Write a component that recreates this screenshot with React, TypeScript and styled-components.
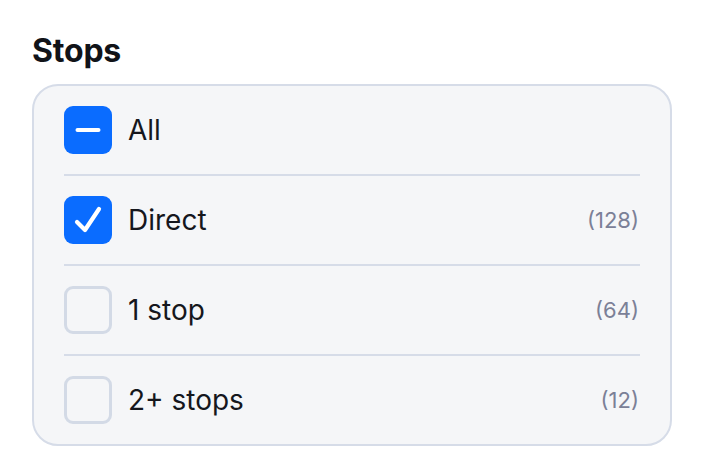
import React from "react";
import styled, { createGlobalStyle } from "styled-components";

const Global = createGlobalStyle`
  html, body { margin: 0; padding: 0; background: #ffffff; }
  body { font-family: Inter, "Noto Sans", sans-serif; color: #14161c; }
`;

const Page = styled.div`
  padding: 31px 32px 0 32px;
  width: 640px;
`;

const Title = styled.h2`
  margin: 0 0 13px 0;
  font-size: 32px;
  line-height: 40px;
  font-weight: 700;
  letter-spacing: -0.2px;
  color: #111318;
`;

const Panel = styled.div`
  box-sizing: border-box;
  width: 640px;
  border: 2px solid #d6dce8;
  border-radius: 26px;
  background: #f5f6f8;
  padding: 0 30px;
`;

const Row = styled.label`
  display: flex;
  align-items: center;
  gap: 16px;
  height: 88px;
  border-top: ${(p: { $first?: boolean }) => (p.$first ? "none" : "2px solid #d6dce8")};
`;

const Box = styled.span<{ $on: boolean }>`
  box-sizing: border-box;
  width: 48px;
  height: 48px;
  flex: none;
  border-radius: 9px;
  display: flex;
  align-items: center;
  justify-content: center;
  background: ${(p) => (p.$on ? "#0a6cff" : "transparent")};
  border: ${(p) => (p.$on ? "none" : "3px solid #d3dae6")};
`;

const Label = styled.span`
  font-size: 28px;
  font-weight: 400;
  flex: 1;
  color: #15171d;
`;

const Count = styled.span`
  font-size: 22px;
  color: #7b8097;
  margin-right: 1px;
`;

type State = "mixed" | "checked" | "off";

const items: { label: string; count?: number; state: State }[] = [
  { label: "All", state: "mixed" },
  { label: "Direct", count: 128, state: "checked" },
  { label: "1 stop", count: 64, state: "off" },
  { label: "2+ stops", count: 12, state: "off" },
];

function Mark({ state }: { state: State }) {
  if (state === "mixed")
    return (
      <svg width="48" height="48" viewBox="0 0 48 48">
        <line x1="13.5" y1="24" x2="34.5" y2="24" stroke="#fff" strokeWidth="4" strokeLinecap="round" />
      </svg>
    );
  if (state === "checked")
    return (
      <svg width="48" height="48" viewBox="0 0 48 48">
        <path d="M13 26 L21 34 L35 13" fill="none" stroke="#fff" strokeWidth="4.2" strokeLinecap="round" strokeLinejoin="round" />
      </svg>
    );
  return null;
}

export default function App() {
  return (
    <Page>
      <Global />
      <Title>Stops</Title>
      <Panel>
        {items.map((it, i) => (
          <Row key={it.label} $first={i === 0}>
            <Box $on={it.state !== "off"}>
              <Mark state={it.state} />
            </Box>
            <Label>{it.label}</Label>
            {it.count !== undefined && <Count>({it.count})</Count>}
          </Row>
        ))}
      </Panel>
    </Page>
  );
}
